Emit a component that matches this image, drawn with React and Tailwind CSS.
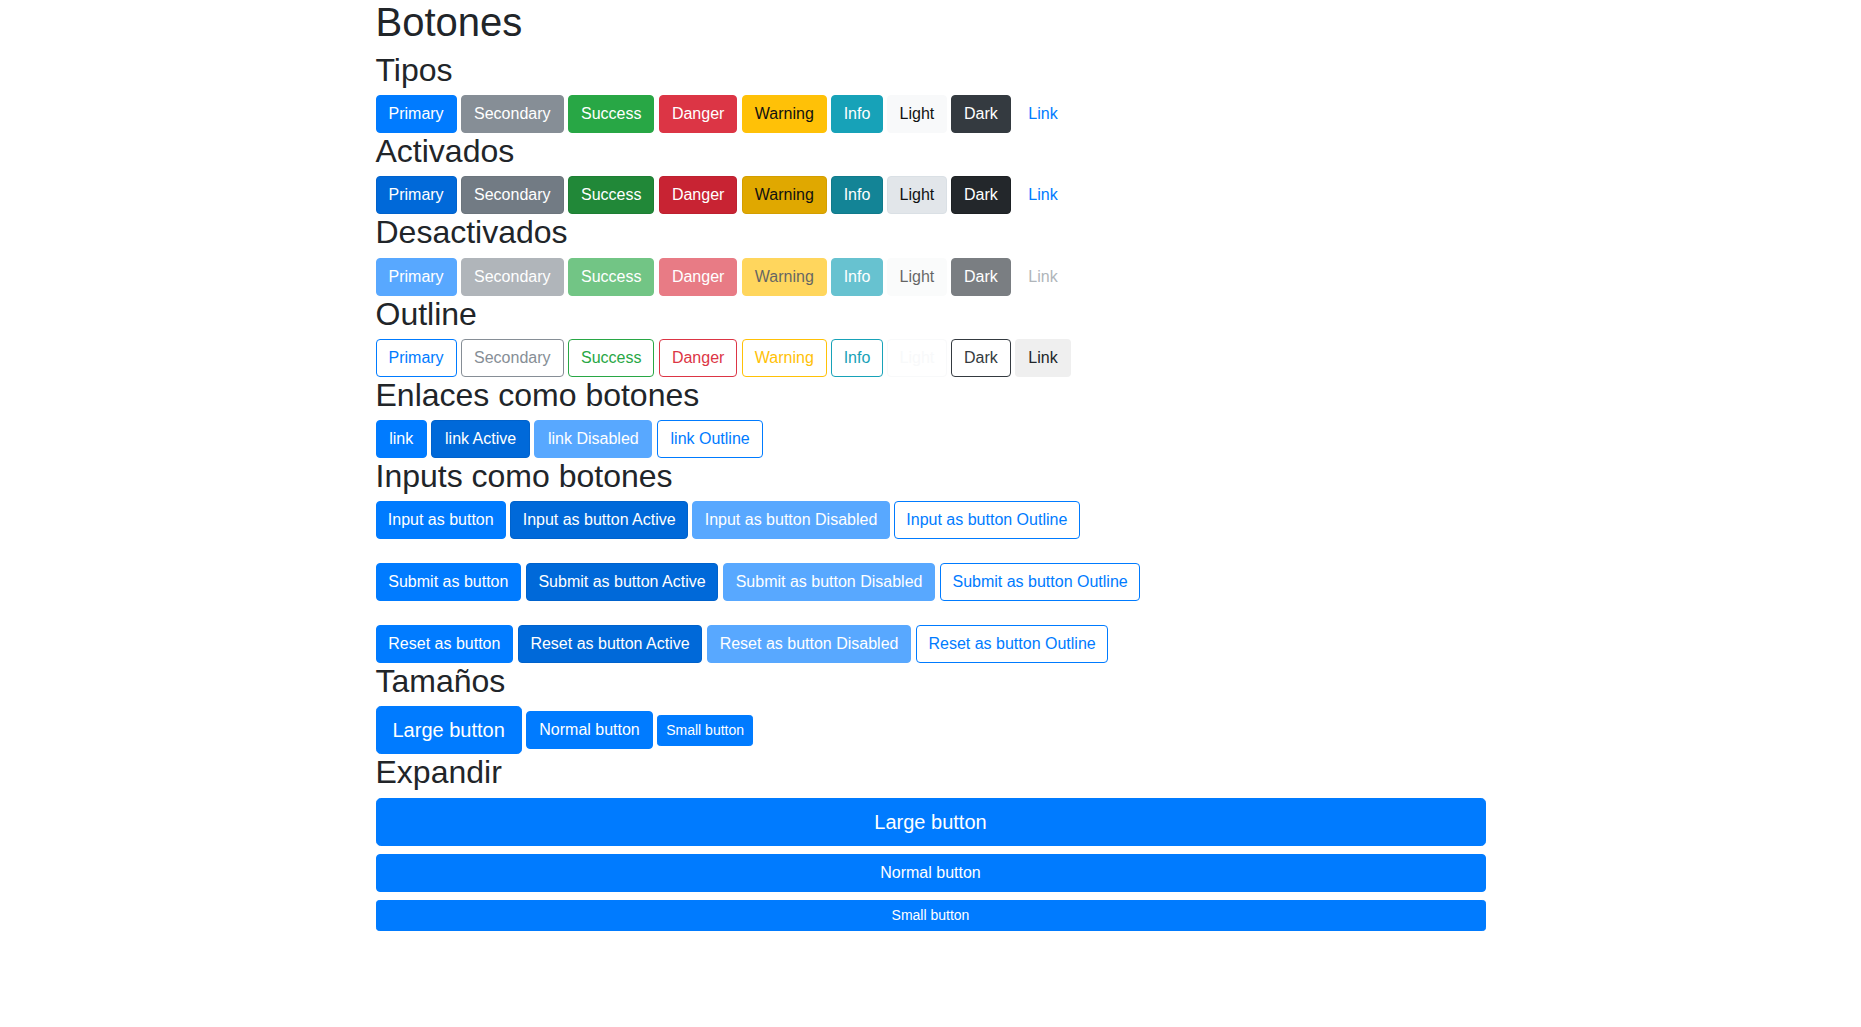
import React from "react";

const BASE =
  "inline-block font-normal text-center align-middle border border-solid whitespace-nowrap select-none";
const SIZE = {
  md: "px-3 py-[6px] text-[16px] leading-[24px] rounded-[4px]",
  nr: "px-[11.4px] py-[6px] text-[16px] leading-[24px] rounded-[4px]",
  lk: "px-[12.7px] py-[6px] text-[16px] leading-[24px] rounded-[4px]",
  in: "px-[11.3px] py-[6px] text-[16px] leading-[24px] rounded-[4px]",
  sb: "px-[11.8px] py-[6px] text-[16px] leading-[24px] rounded-[4px]",
  lg: "px-4 py-2 text-[20px] leading-[30px] rounded-[4.8px]",
  sm: "px-2 py-1 text-[14px] leading-[21px] rounded-[3.2px]",
};

const SOLID = {
  primary: "bg-[#007bff] border-[#007bff] text-white",
  secondary: "bg-[#868e96] border-[#868e96] text-white",
  success: "bg-[#28a745] border-[#28a745] text-white",
  danger: "bg-[#dc3545] border-[#dc3545] text-white",
  warning: "bg-[#ffc107] border-[#ffc107] text-[#111111]",
  info: "bg-[#17a2b8] border-[#17a2b8] text-white",
  light: "bg-[#f8f9fa] border-[#f8f9fa] text-[#111111]",
  dark: "bg-[#343a40] border-[#343a40] text-white",
  link: "bg-transparent border-transparent text-[#007bff]",
};

const ACTIVE = {
  primary: "bg-[#0069d9] border-[#0062cc] text-white",
  secondary: "bg-[#727b84] border-[#6c757d] text-white",
  success: "bg-[#218838] border-[#1e7e34] text-white",
  danger: "bg-[#c82333] border-[#bd2130] text-white",
  warning: "bg-[#e0a800] border-[#d39e00] text-[#111111]",
  info: "bg-[#138496] border-[#117a8b] text-white",
  light: "bg-[#e2e6ea] border-[#dae0e5] text-[#111111]",
  dark: "bg-[#23272b] border-[#1d2124] text-white",
  link: "bg-transparent border-transparent text-[#007bff]",
};

const DISABLED = {
  primary: "bg-[#007bff] border-[#007bff] text-white opacity-[0.65]",
  secondary: "bg-[#868e96] border-[#868e96] text-white opacity-[0.65]",
  success: "bg-[#28a745] border-[#28a745] text-white opacity-[0.65]",
  danger: "bg-[#dc3545] border-[#dc3545] text-white opacity-[0.65]",
  warning: "bg-[#ffc107] border-[#ffc107] text-[#111111] opacity-[0.65]",
  info: "bg-[#17a2b8] border-[#17a2b8] text-white opacity-[0.65]",
  light: "bg-[#f8f9fa] border-[#f8f9fa] text-[#111111] opacity-[0.65]",
  dark: "bg-[#343a40] border-[#343a40] text-white opacity-[0.65]",
  link: "bg-transparent border-transparent text-[#868e96] opacity-[0.65]",
};

const OUTLINE = {
  primary: "bg-transparent border-[#007bff] text-[#007bff]",
  secondary: "bg-transparent border-[#868e96] text-[#868e96]",
  success: "bg-transparent border-[#28a745] text-[#28a745]",
  danger: "bg-transparent border-[#dc3545] text-[#dc3545]",
  warning: "bg-transparent border-[#ffc107] text-[#ffc107]",
  info: "bg-transparent border-[#17a2b8] text-[#17a2b8]",
  light: "bg-transparent border-[#f8f9fa] text-[#f8f9fa]",
  dark: "bg-transparent border-[#343a40] text-[#343a40]",
  link: "bg-[#efefef] border-transparent text-[#212529]",
};

const TYPES = [
  ["primary", "Primary", "md"],
  ["secondary", "Secondary", "md"],
  ["success", "Success", "md"],
  ["danger", "Danger", "md"],
  ["warning", "Warning", "md"],
  ["info", "Info", "nr"],
  ["light", "Light", "nr"],
  ["dark", "Dark", "md"],
  ["link", "Link", "md"],
];

function Btn({ cls, size = "md", extra = "", children }) {
  return <span className={`${BASE} ${SIZE[size]} ${cls} ${extra}`}>{children}</span>;
}

function H1({ children }) {
  return <h1 className="text-[40px] leading-[1.1] font-medium mb-2 text-[#212529]">{children}</h1>;
}
function H2({ children }) {
  return (
    <h2 className="text-[32px] leading-[1.1] font-medium pt-px mb-[7px] text-[#212529]">{children}</h2>
  );
}

function Row({ children, extra = "" }) {
  return <div className={`flex items-start gap-[4.45px] ${extra}`}>{children}</div>;
}

function TypeRow({ map }) {
  return (
    <Row>
      {TYPES.map(([k, label, size]) => (
        <Btn key={k} cls={map[k]} size={size}>
          {label}
        </Btn>
      ))}
    </Row>
  );
}

function QuadRow({ base, size = "md" }) {
  return (
    <Row>
      <Btn cls={SOLID.primary} size={size}>{base}</Btn>
      <Btn cls={ACTIVE.primary} size={size}>{base} Active</Btn>
      <Btn cls={DISABLED.primary} size={size}>{base} Disabled</Btn>
      <Btn cls={OUTLINE.primary} size={size}>{base} Outline</Btn>
    </Row>
  );
}

export default function App() {
  return (
    <div
      className="bg-white min-h-screen text-[#212529] text-[16px] leading-[1.5]"
      style={{ fontFamily: '"Liberation Sans", Arial, sans-serif' }}
    >
      <div className="max-w-[1140px] mx-auto px-[15px]">
        <H1>Botones</H1>
        <H2>Tipos</H2>
        <TypeRow map={SOLID} />
        <H2>Activados</H2>
        <TypeRow map={ACTIVE} />
        <H2>Desactivados</H2>
        <TypeRow map={DISABLED} />
        <H2>Outline</H2>
        <TypeRow map={OUTLINE} />
        <H2>Enlaces como botones</H2>
        <QuadRow base="link" size="lk" />
        <H2>Inputs como botones</H2>
        <div className="flex flex-col gap-6">
          <QuadRow base="Input as button" size="in" />
          <QuadRow base="Submit as button" size="sb" />
          <QuadRow base="Reset as button" size="sb" />
        </div>
        <H2>Tamaños</H2>
        <div className="flex items-center gap-[4.45px]">
          <Btn cls={SOLID.primary} size="lg">Large button</Btn>
          <Btn cls={SOLID.primary}>Normal button</Btn>
          <Btn cls={SOLID.primary} size="sm">Small button</Btn>
        </div>
        <H2>Expandir</H2>
        <div className="flex flex-col gap-2">
          <Btn cls={SOLID.primary} size="lg" extra="block w-full">Large button</Btn>
          <Btn cls={SOLID.primary} extra="block w-full">Normal button</Btn>
          <Btn cls={SOLID.primary} size="sm" extra="block w-full">Small button</Btn>
        </div>
      </div>
    </div>
  );
}
